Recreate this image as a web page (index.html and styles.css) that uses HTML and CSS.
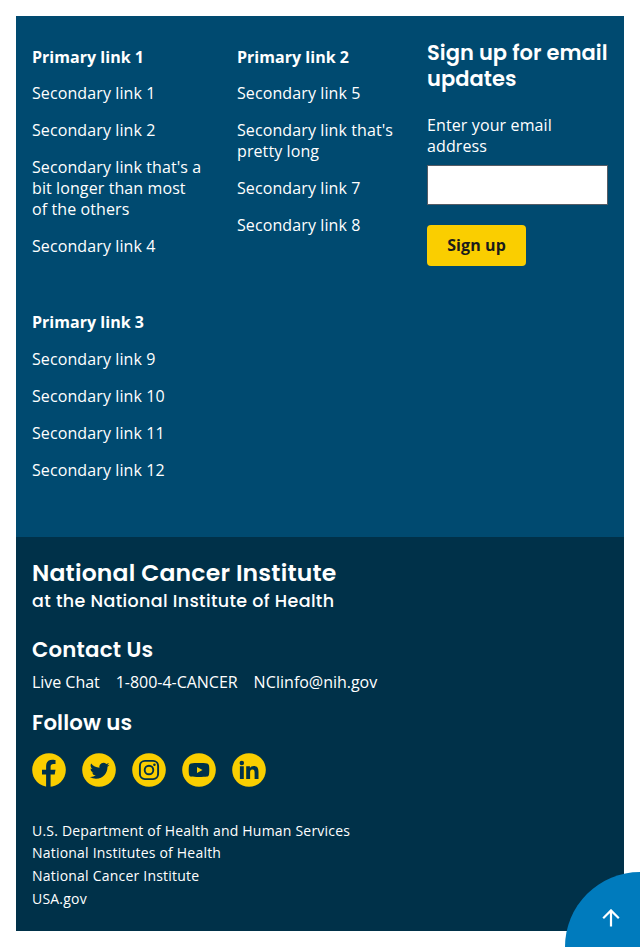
FILE: index.html
```html
<!DOCTYPE html>
<html lang="en">
<head>
<meta charset="utf-8">
<title>National Cancer Institute</title>
<link rel="stylesheet" href="styles.css">
</head>
<body>
<footer class="footer">
  <div class="footer-primary">
    <nav class="link-groups">
      <section class="link-group">
        <h3>Primary link 1</h3>
        <ul>
          <li><a>Secondary link 1</a></li>
          <li><a>Secondary link 2</a></li>
          <li><a>Secondary link that's a bit longer than most of the others</a></li>
          <li><a>Secondary link 4</a></li>
        </ul>
      </section>
      <section class="link-group">
        <h3>Primary link 2</h3>
        <ul>
          <li><a>Secondary link 5</a></li>
          <li><a>Secondary link that's pretty long</a></li>
          <li><a>Secondary link 7</a></li>
          <li><a>Secondary link 8</a></li>
        </ul>
      </section>
      <section class="link-group link-group-last">
        <h3>Primary link 3</h3>
        <ul>
          <li><a>Secondary link 9</a></li>
          <li><a>Secondary link 10</a></li>
          <li><a>Secondary link 11</a></li>
          <li><a>Secondary link 12</a></li>
        </ul>
      </section>
    </nav>
    <form class="signup">
      <h3 class="heading signup-title">Sign up for email updates</h3>
      <label for="email">Enter your email address</label>
      <input id="email" type="email">
      <button type="button">Sign up</button>
    </form>
  </div>
  <div class="footer-secondary">
    <div class="heading org-name">National Cancer Institute</div>
    <div class="heading org-parent">at the National Institute of Health</div>
    <h3 class="heading contact-title">Contact Us</h3>
    <address class="contact-links"><a>Live Chat</a><a>1-800-4-CANCER</a><a>NCIinfo@nih.gov</a></address>
    <h3 class="heading follow-title">Follow us</h3>
    <div class="social">
      <svg viewBox="0 0 34 34" role="img" aria-label="Facebook"><circle cx="17" cy="17" r="16.8"/><path class="cut" d="M14.1 34V21.6H10v-4.9h4.1V13c0-4.2 2.5-6.3 6.2-6.3 1.8 0 3.2.3 3.2.3v4.1h-2c-2.1 0-2.9 1.2-2.9 2.6v3h4.9l-.8 4.9h-4.1V34z"/></svg>
      <svg viewBox="0 0 34 34" role="img" aria-label="Twitter"><circle cx="17" cy="17" r="16.8"/><path class="cut" transform="translate(7.8 7.9) scale(.82)" d="M23.953 4.57a10 10 0 01-2.825.775 4.958 4.958 0 002.163-2.723c-.951.555-2.005.959-3.127 1.184a4.92 4.92 0 00-8.384 4.482C7.69 8.095 4.067 6.13 1.64 3.162a4.822 4.822 0 00-.666 2.475c0 1.71.87 3.213 2.188 4.096a4.904 4.904 0 01-2.228-.616v.06a4.923 4.923 0 003.946 4.827 4.996 4.996 0 01-2.212.085 4.936 4.936 0 004.604 3.417 9.867 9.867 0 01-6.102 2.105c-.39 0-.779-.023-1.17-.067a13.995 13.995 0 007.557 2.209c9.053 0 13.998-7.496 13.998-13.985 0-.21 0-.42-.015-.63A9.935 9.935 0 0024 4.59z"/></svg>
      <svg viewBox="0 0 34 34" role="img" aria-label="Instagram"><circle cx="17" cy="17" r="16.8"/><rect class="line" x="7.9" y="7.9" width="18.2" height="18.2" rx="5"/><circle class="line" cx="17" cy="17" r="4.3"/><circle class="cut" cx="22.4" cy="11.7" r="1.25"/></svg>
      <svg viewBox="0 0 34 34" role="img" aria-label="YouTube"><circle cx="17" cy="17" r="16.8"/><path class="cut" fill-rule="evenodd" d="M17 9.9c3 0 6.3.1 8 .5 1.1.3 1.8 1.1 2 2.2.4 2.7.4 6.1 0 8.8-.2 1.1-.9 1.9-2 2.2-3.4.6-12.6.6-16 0-1.1-.3-1.8-1.1-2-2.2-.4-2.7-.4-6.1 0-8.8.2-1.1.9-1.9 2-2.2 1.7-.4 5-.5 8-.5zM15 14v6l5.5-3z"/></svg>
      <svg viewBox="0 0 34 34" role="img" aria-label="LinkedIn"><circle cx="17" cy="17" r="16.8"/><circle class="cut" cx="9.8" cy="10" r="2.25"/><path class="cut" d="M7.9 13.2h3.9v12.9H7.9zM14.2 13.2h3.7V15c.7-1.3 2.1-2.1 3.9-2.1 3.8 0 4.7 2.5 4.7 6.1v7.1h-3.9v-6.3c0-1.7-.1-3.4-2.2-3.4-2 0-2.3 1.6-2.3 3.3v6.4h-3.9z"/></svg>
    </div>
    <ul class="agencies">
      <li><a>U.S. Department of Health and Human Services</a></li>
      <li><a>National Institutes of Health</a></li>
      <li><a>National Cancer Institute</a></li>
      <li><a>USA.gov</a></li>
    </ul>
  </div>
</footer>
<a class="back-to-top" aria-label="Back to top"><svg viewBox="0 0 18 18"><path d="M9 17.5V2M1.2 9.2 9 1.4l7.8 7.8"/></svg></a>
</body>
</html>
```
FILE: styles.css
```css
* { box-sizing: border-box; }
body {
  margin: 0;
  padding: 16px;
  background: #fff;
  color: #fff;
  font: 16px/21px "Open Sans", sans-serif;
}
h3, ul { margin: 0; padding: 0; }
ul { list-style: none; }
.footer-primary {
  display: flex;
  height: 521px;
  padding: 0 16px;
  background: #004a70;
}
.link-groups {
  display: grid;
  grid-template-columns: 171px 162px;
  grid-template-rows: 265px auto;
  column-gap: 34px;
  width: 395px;
  padding-top: 31px;
}
.link-group h3 { margin-bottom: 15px; font-size: 16px; font-weight: 700; letter-spacing: 0.03px; }
.link-group-last h3 { margin-bottom: 16px; }
.link-group li { margin-bottom: 16px; letter-spacing: 0.1px; }
.heading {
  font-family: Poppins, Inter, sans-serif;
  font-weight: 600;
}
.signup { width: 181px; padding-top: 24px; }
.signup-title { margin-bottom: 23px; font-size: 21px; line-height: 26px; letter-spacing: 0.04px; }
.signup label { display: block; margin-bottom: 8px; letter-spacing: 0.12px; }
.signup input {
  display: block;
  width: 181px;
  height: 40px;
  margin: 0 0 20px;
  border: 1px solid #565c65;
  background: #fff;
}
.signup button {
  display: block;
  width: 99px;
  height: 41px;
  padding: 0;
  border: 0;
  border-radius: 4px;
  background: #face00;
  color: #1b1b1b;
  font: 700 16px/21px "Open Sans", sans-serif;
  letter-spacing: 0.1px;
}
.footer-secondary { height: 394px; padding: 22px 16px 0; background: #003149; }
.org-name { font-size: 23.5px; line-height: 28px; letter-spacing: 0.2px; }
.org-parent { margin-bottom: 24px; font-size: 17.5px; line-height: 28px; font-weight: 500; letter-spacing: 0.34px; }
.contact-title { font-size: 21.3px; line-height: 22px; letter-spacing: 0.2px; }
.contact-links { display: flex; gap: 16px; margin: 11px 0 19px; font-style: normal; letter-spacing: -0.03px; }
.follow-title { font-size: 21.3px; line-height: 22px; letter-spacing: 0.12px; }
.social { display: flex; gap: 16px; margin: 19px 0 32.6px; }
.social svg { display: block; width: 34px; height: 34px; fill: #face00; }
.social .cut { fill: #003149; }
.social .line { fill: none; stroke: #003149; stroke-width: 1.9; }
.agencies { font-size: 14px; line-height: 22.7px; letter-spacing: 0.21px; }
.back-to-top {
  position: fixed;
  right: 0;
  bottom: 0;
  width: 75px;
  height: 75px;
  padding: 37px 0 0 37px;
  border-radius: 75px 0 0;
  background: #007bbd;
}
.back-to-top svg { display: block; width: 18px; height: 18px; fill: none; stroke: #fff; stroke-width: 2.2; }
```
